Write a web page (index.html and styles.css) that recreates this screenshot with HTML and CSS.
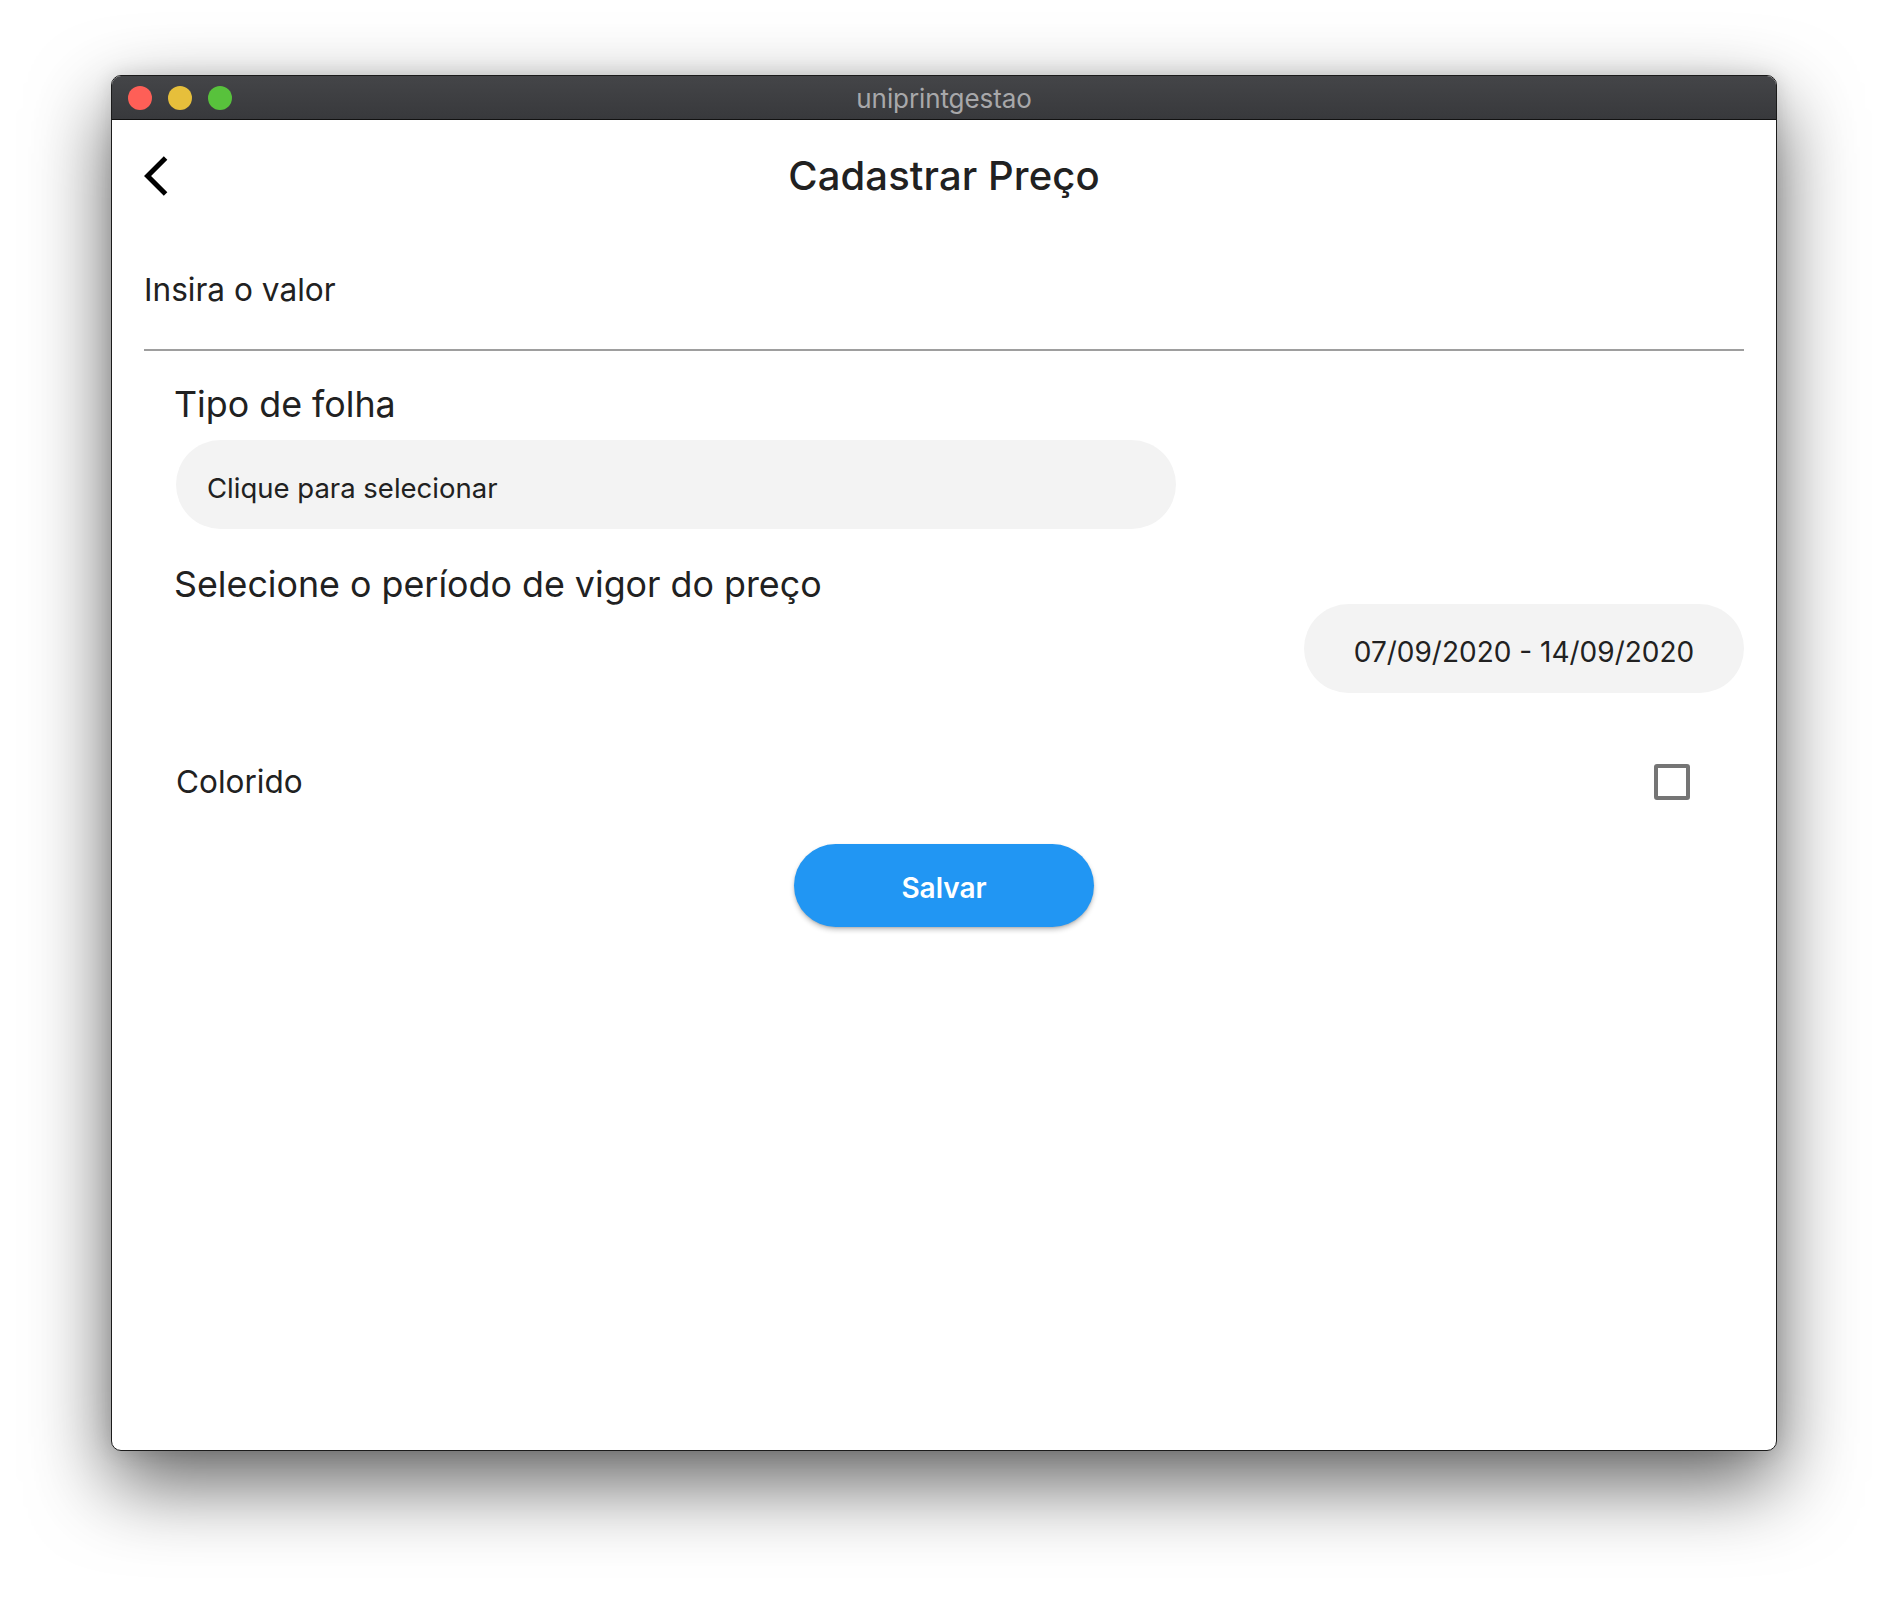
FILE: index.html
```html
<!DOCTYPE html>
<html lang="pt-BR">
<head>
<meta charset="utf-8">
<title>uniprintgestao</title>
<link rel="stylesheet" href="styles.css">
</head>
<body>
<div class="desktop">
  <div class="window">
    <div class="titlebar">
      <div class="lights">
        <span class="light red"></span>
        <span class="light yellow"></span>
        <span class="light green"></span>
      </div>
      <div class="wtitle">uniprintgestao</div>
      <div></div>
    </div>
    <div class="app">
      <header class="appbar">
        <div class="lead">
          <button class="back" aria-label="Voltar">
            <svg width="48" height="48" viewBox="0 0 24 24"><path d="M11.67 3.87L9.9 2.1 0 12l9.9 9.9 1.77-1.77L3.54 12z" fill="#000"/></svg>
          </button>
        </div>
        <h1 class="title">Cadastrar Preço</h1>
        <div></div>
      </header>
      <main class="form">
        <div class="field"><span class="label">Insira o valor</span></div>
        <section class="group">
          <h2 class="heading">Tipo de folha</h2>
          <div class="select-pill">Clique para selecionar</div>
          <h2 class="heading heading-period">Selecione o período de vigor do preço</h2>
          <div class="date-row"><div class="date-pill">07/09/2020 - 14/09/2020</div></div>
          <div class="check-row"><span class="check-label">Colorido</span><span class="checkbox"></span></div>
        </section>
        <div class="actions"><button class="save">Salvar</button></div>
      </main>
    </div>
  </div>
</div>
</body>
</html>
```

FILE: styles.css
```css
html, body {
  margin: 0;
  padding: 0;
  background: #ffffff;
}
body {
  font-family: Inter, "Noto Sans", sans-serif;
  color: #212121;
}
.desktop {
  width: 1888px;
  height: 1598px;
  box-sizing: border-box;
  padding: 75px 0 0 111px;
  overflow: hidden;
}
.window {
  width: 1666px;
  height: 1376px;
  box-sizing: border-box;
  border: 1px solid #1b1b1b;
  border-radius: 10px;
  overflow: hidden;
  background: #ffffff;
  box-shadow: 0 32px 80px rgba(0, 0, 0, 0.62), 0 0 20px rgba(0, 0, 0, 0.12);
}
.titlebar {
  height: 44px;
  box-sizing: border-box;
  border-bottom: 1px solid #111;
  background: linear-gradient(#444548, #38393c);
  display: grid;
  grid-template-columns: 1fr auto 1fr;
  align-items: center;
}
.lights {
  display: flex;
  gap: 16px;
  padding-left: 16px;
}
.light {
  width: 24px;
  height: 24px;
  border-radius: 50%;
}
.red { background: #fe5f57; }
.yellow { background: #e6bf3b; }
.green { background: #58c23c; }
.wtitle {
  font-size: 26px;
  line-height: 43px;
  color: #a8a8aa;
  padding-top: 1px;
  letter-spacing: -0.1px;
}
.appbar {
  height: 112px;
  display: grid;
  grid-template-columns: 1fr auto 1fr;
  align-items: center;
}
.lead {
  padding-left: 32px;
  display: flex;
  align-items: center;
}
.back {
  border: 0;
  padding: 0;
  background: none;
  width: 48px;
  height: 48px;
  display: block;
}
.back svg { display: block; }
.title {
  margin: 0;
  font-size: 40px;
  font-weight: 500;
  line-height: 48px;
  color: #212121;
  letter-spacing: 0.1px;
}
.form {
  padding: 0 32px;
}
.field {
  padding: 38px 0 39px;
  border-bottom: 2px solid #9e9e9e;
}
.label {
  display: block;
  font-size: 31.6px;
  line-height: 40px;
  color: #212121;
}
.group {
  padding-left: 32px;
}
.heading {
  margin: 31px 0 0 -2px;
  font-size: 35.8px;
  font-weight: 400;
  line-height: 44px;
  color: #212121;
}
.heading-period {
  margin-top: 35px;
  line-height: 40px;
}
.select-pill {
  margin-top: 14px;
  width: 1000px;
  height: 89px;
  box-sizing: border-box;
  border-radius: 45px;
  background: #f3f3f3;
  padding: 6px 0 0 31px;
  display: flex;
  align-items: center;
  font-size: 27.5px;
  line-height: 34px;
  color: #212121;
}
.date-row {
  display: flex;
  justify-content: flex-end;
}
.date-pill {
  width: 440px;
  height: 89px;
  box-sizing: border-box;
  border-radius: 45px;
  background: #f3f3f3;
  padding-top: 6px;
  display: flex;
  align-items: center;
  justify-content: center;
  font-size: 28px;
  line-height: 34px;
  color: #212121;
}
.check-row {
  margin-top: 33px;
  height: 112px;
  display: flex;
  align-items: center;
  justify-content: space-between;
  padding-right: 54px;
}
.check-label {
  font-size: 31.5px;
  line-height: 40px;
  color: #212121;
}
.checkbox {
  width: 36px;
  height: 36px;
  box-sizing: border-box;
  border: 4px solid #757575;
  border-radius: 3px;
}
.actions {
  margin-top: 6px;
  display: flex;
  justify-content: center;
}
.save {
  width: 300px;
  height: 83px;
  border: 0;
  border-radius: 42px;
  background: #2196f3;
  color: #ffffff;
  font-family: Inter, "Noto Sans", sans-serif;
  font-size: 28px;
  font-weight: 600;
  padding: 4px 0 0;
  box-shadow: 0 3px 5px rgba(0, 0, 0, 0.22), 0 1px 2px rgba(0, 0, 0, 0.12);
}
```
